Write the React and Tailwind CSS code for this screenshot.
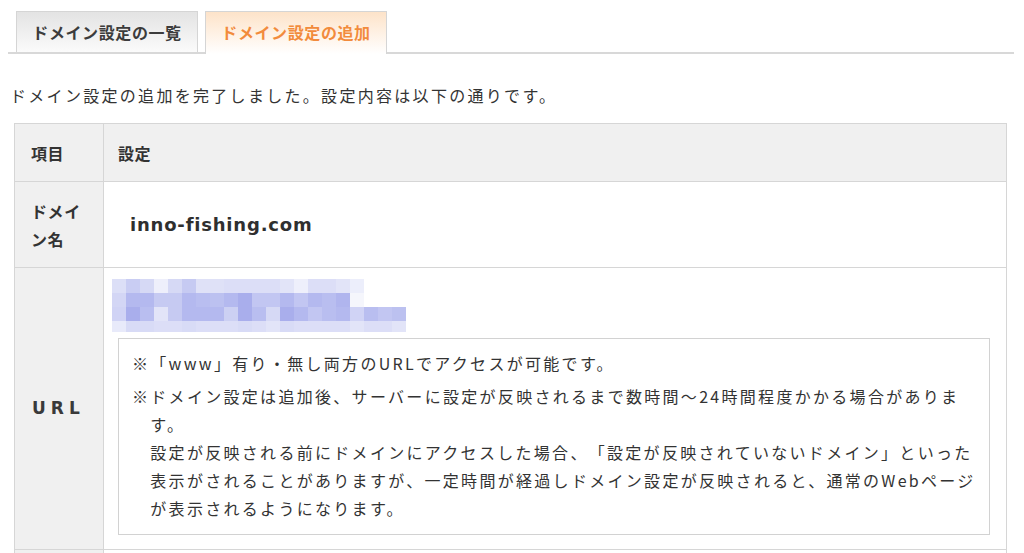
import React from "react";

const JP = { fontFamily: '"Noto Sans CJK JP", "Noto Sans", sans-serif' };

const mosaic = [
  ["#dcdff7","#c9cdf3","#d6d9f5","#eeeffb","#d6d9f5","#c6caf2","#dfe1f7","#dfe1f7","#dcdef7","#dcdef7","#dcdef7","#dcdef7","#e2e4f8","#eeeffb","#dcdef7","#dcdef7","#e2e4f8","#eceefb"],
  ["#d3d6f5","#b4b9ef","#b4b9ef","#c6caf2","#c6caf2","#b4b9ef","#b9bef0","#bcc1f0","#b4b9ef","#a9aeec","#c2c6f2","#c2c6f2","#b4b9ef","#c2c6f2","#b4b9ef","#b9bef0","#b0b5ee","#f5f6fc"],
  ["#d0d3f5","#a9aeec","#b9bef0","#e2e4f8","#c6caf2","#b4b9ef","#b4b9ef","#b4b9ef","#ccd0f3","#a9aeec","#b9bef0","#d6d9f5","#a9aeec","#b4b9ef","#c2c6f2","#b9bef0","#b4b9ef","#d0d3f5","#b9bef0","#c2c6f2","#bcc1f0"],
  ["#e8eafa","#d8dbf6","#d8dbf6","#dcdef7","#dcdef7","#d8dbf6","#dcdef7","#dcdef7","#dcdef7","#d8dbf6","#dcdef7","#e2e4f8","#d8dbf6","#dcdef7","#dcdef7","#dcdef7","#dcdef7","#e2e4f8","#dcdef7","#dcdef7","#e2e4f8"],
];
const rowH = [14, 14, 14, 11];

function Mosaic() {
  let y = 0;
  const rects = [];
  mosaic.forEach((row, r) => {
    row.forEach((c, i) => {
      rects.push(<rect key={r + "-" + i} x={i * 14} y={y} width="14" height={rowH[r]} fill={c} />);
    });
    y += rowH[r];
  });
  return (
    <svg width="294" height="53" viewBox="0 0 294 53" className="block">
      {rects}
    </svg>
  );
}

export default function App() {
  return (
    <div className="w-[1024px] h-[553px] bg-white overflow-hidden text-[#333] [text-spacing-trim:space-all]" style={JP}>
      {/* Tabs */}
      <div className="pt-[11px] pl-[8px]">
        <div className="w-[1006px] flex gap-[7px] pl-[8px] border-b-2 border-[#d8d8d8]">
          <div className="w-[182px] h-[41px] border border-b-0 border-[#d5d5d5] bg-gradient-to-b from-[#e3e3e3] to-[#fbfbfb] flex items-center justify-center text-[16px] font-bold tracking-[0.6px] text-[#3c3c3c]">
            ドメイン設定の一覧
          </div>
          <div className="w-[182px] h-[43px] -mb-[2px] border border-b-0 border-[#d5d5d5] bg-gradient-to-b from-[#fde3c9] to-white flex items-center justify-center pb-[2px] text-[16px] font-bold tracking-[0.6px] text-[#f28b3c]">
            ドメイン設定の追加
          </div>
        </div>
      </div>

      {/* Message */}
      <p className="mt-[27px] pl-[10px] text-[16px] leading-[28px] tracking-[2.3px]">
        ドメイン設定の追加を完了しました。設定内容は以下の通りです。
      </p>

      {/* Table */}
      <table className="mt-[14px] ml-[14px] w-[993px] border-collapse table-fixed">
        <colgroup>
          <col className="w-[89px]" />
          <col />
        </colgroup>
        <tbody>
          <tr className="h-[58px] bg-[#f0f0f0]">
            <td className="border border-[#d6d6d6] pl-[16px] text-[16px] font-bold tracking-[0.6px] align-middle">項目</td>
            <td className="border border-[#d6d6d6] pl-[14px] text-[16px] font-bold tracking-[0.6px] align-middle">設定</td>
          </tr>
          <tr className="h-[86px]">
            <td className="border border-[#d6d6d6] bg-[#f0f0f0] pl-[16px] pr-[14px] text-[16px] leading-[28px] font-bold tracking-[0.6px] align-middle">
              ドメイン名
            </td>
            <td className="border border-[#d6d6d6] bg-white pl-[26px] align-middle">
              <span
                className="text-[18px] font-bold tracking-[0.8px] text-[#2f2f2f]"
                style={{ fontFamily: '"DejaVu Sans", "Noto Sans", sans-serif' }}
              >
                inno-fishing.com
              </span>
            </td>
          </tr>
          <tr>
            <td className="border border-[#d6d6d6] bg-[#f0f0f0] pl-[17px] pr-0 align-middle">
              <span
                className="text-[17px] font-bold tracking-[5px] text-[#3a3a3a]"
                style={{ fontFamily: '"DejaVu Sans", sans-serif' }}
              >
                URL
              </span>
            </td>
            <td className="border border-[#d6d6d6] bg-white pt-[11px] pb-[14px] pl-[8px] pr-[16px] align-top">
              <Mosaic />
              <div className="mt-[6px] ml-[6px] border border-[#d2d2d2] pl-[13px] pr-[10px] pt-[10px] pb-[12px] text-[16px] leading-[28px] tracking-[2.3px] whitespace-nowrap">
                <div>※「www」有り・無し両方のURLでアクセスが可能です。</div>
                <div className="mt-[5px] flex">
                  <span>※</span>
                  <div>
                    <div>ドメイン設定は追加後、サーバーに設定が反映されるまで数時間〜24時間程度かかる場合がありま</div>
                    <div>す。</div>
                    <div>設定が反映される前にドメインにアクセスした場合、「設定が反映されていないドメイン」といった</div>
                    <div>表示がされることがありますが、一定時間が経過しドメイン設定が反映されると、通常のWebページ</div>
                    <div>が表示されるようになります。</div>
                  </div>
                </div>
              </div>
            </td>
          </tr>
          <tr className="h-[40px]">
            <td className="border border-[#d6d6d6] bg-[#f0f0f0]"></td>
            <td className="border border-[#d6d6d6] bg-white"></td>
          </tr>
        </tbody>
      </table>
    </div>
  );
}
